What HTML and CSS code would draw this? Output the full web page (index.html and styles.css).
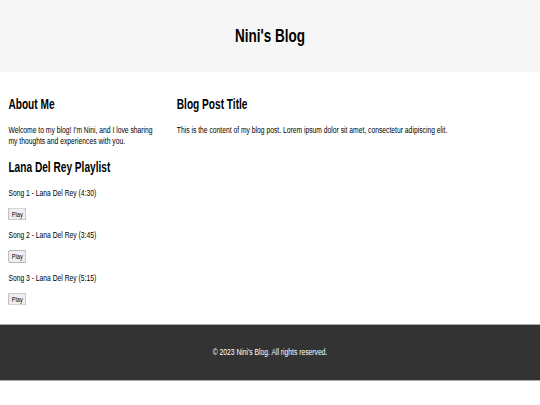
FILE: index.html
```html
<!DOCTYPE html>
<html lang="en">
<head>
    <meta charset="UTF-8">
    <meta name="viewport" content="width=device-width, initial-scale=1.0">
    <title>Nini's Blog</title>
    <link rel="stylesheet" href="styles.css">
</head>
<body>
    <div class="page">
        <header class="site-header">
            <h1>Nini's Blog</h1>
        </header>
        <main class="layout">
            <aside class="sidebar">
                <h2>About Me</h2>
                <p>Welcome to my blog! I'm Nini, and I love sharing my thoughts and experiences with you.</p>
                <h2>Lana Del Rey Playlist</h2>
                <ul class="playlist">
                    <li>
                        <p>Song 1 - Lana Del Rey (4:30)</p>
                        <button class="play">Play</button>
                    </li>
                    <li>
                        <p>Song 2 - Lana Del Rey (3:45)</p>
                        <button class="play">Play</button>
                    </li>
                    <li>
                        <p>Song 3 - Lana Del Rey (5:15)</p>
                        <button class="play">Play</button>
                    </li>
                </ul>
            </aside>
            <article class="post">
                <h2>Blog Post Title</h2>
                <p>This is the content of my blog post. Lorem ipsum dolor sit amet, consectetur adipiscing elit.</p>
            </article>
        </main>
        <footer class="site-footer">
            <p>&copy; 2023 Nini's Blog. All rights reserved.</p>
        </footer>
    </div>
</body>
</html>
```

FILE: styles.css
```css
html, body {
    margin: 0;
    padding: 0;
    overflow: hidden;
    background-color: #fff;
}
body {
    font-family: "Liberation Sans", Arial, sans-serif;
    color: #000;
}
.page {
    width: 1280px;
    height: 675px;
    transform: scale(0.421875, 0.6);
    transform-origin: 0 0;
}
.site-header {
    background-color: #f6f6f6;
    padding: 20px;
    text-align: center;
}
.site-header h1 {
    margin: 0.67em 0;
    font-size: 2em;
}
.layout {
    display: flex;
    padding: 20px;
}
.sidebar {
    width: 355px;
    margin-right: 44px;
}
.post {
    flex: 1;
}
h2 {
    font-size: 1.5em;
    margin: 0.83em 0;
}
p {
    margin: 1em 0;
}
.playlist {
    list-style: none;
    margin: 1em 0 0.75em;
    padding: 0;
}
.play {
    font-family: "Liberation Sans", Arial, sans-serif;
    font-size: 13.33px;
}
.site-footer {
    background-color: #333;
    color: #fff;
    padding: 21px 20px 22px;
    text-align: center;
}
```
